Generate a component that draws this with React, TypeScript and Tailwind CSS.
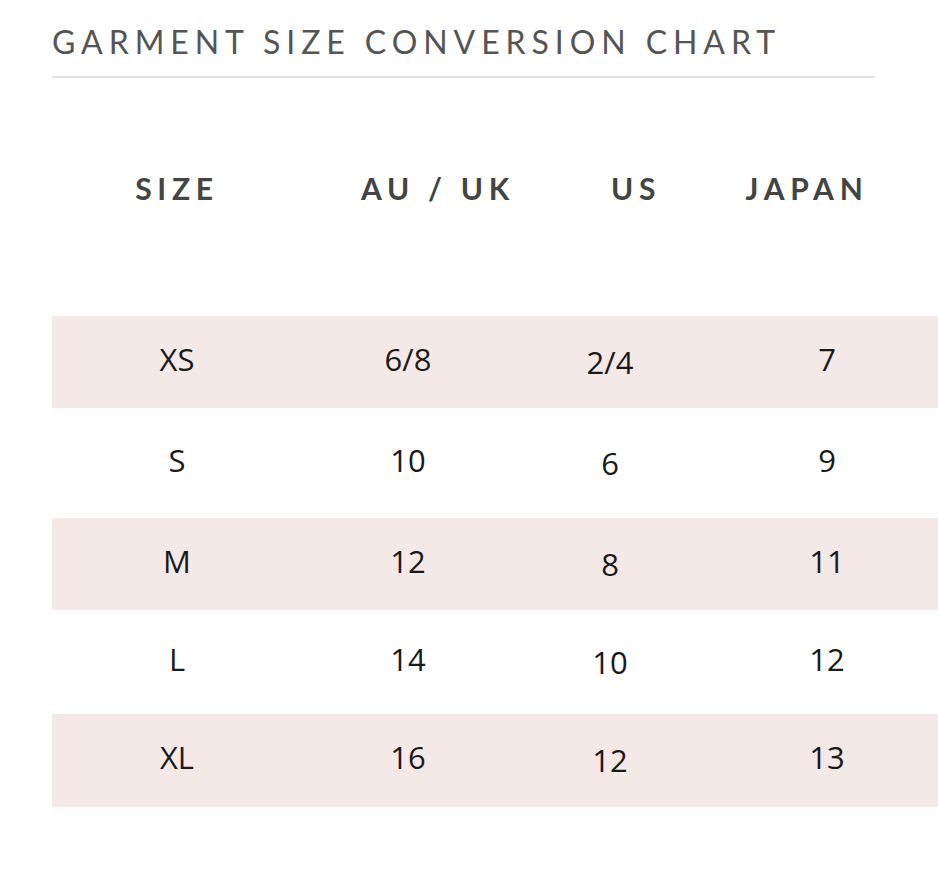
const rows = [
  { size: "XS", au: "6/8", us: "2/4", jp: "7", shaded: true, h: "h-[92px]" },
  { size: "S", au: "10", us: "6", jp: "9", shaded: false, h: "h-[110px]" },
  { size: "M", au: "12", us: "8", jp: "11", shaded: true, h: "h-[92px]" },
  { size: "L", au: "14", us: "10", jp: "12", shaded: false, h: "h-[104px]" },
  { size: "XL", au: "16", us: "12", jp: "13", shaded: true, h: "h-[93px]" },
];

export default function App() {
  return (
    <main className="h-[872px] w-[938px] overflow-hidden bg-white pl-[52px] pt-[26px] font-['Open_Sans',sans-serif]">
      <section className="w-[823px] border-b-2 border-[#e2e2e2] pb-[18px]">
        <h1 className="font-['Lato',sans-serif] text-[32px] leading-[32px] font-normal tracking-[0.185em] whitespace-nowrap text-[#555]">
          GARMENT SIZE CONVERSION CHART
        </h1>
      </section>

      <div className="mt-[88px] grid h-[40px] grid-cols-[250px_272px_124px_218px] items-center font-['Lato',sans-serif] text-[30px] font-bold tracking-[0.19em] text-[#444]">
        <span className="text-center">SIZE</span>
        <span className="text-center">AU / UK</span>
        <span className="text-center">US</span>
        <span className="text-center">JAPAN</span>
      </div>

      <div className="mt-[110px] w-[886px]">
        {rows.map((r) => (
          <div
            key={r.size}
            className={`grid ${r.h} grid-cols-[250px_212px_192px_1fr] items-center text-[31px] text-[#1a1a1a] ${r.shaded ? "bg-[#f5e9e8]" : ""}`}
          >
            <span className="pb-[6px] text-center">{r.size}</span>
            <span className="pb-[6px] text-center">{r.au}</span>
            <span className="text-center">{r.us}</span>
            <span className="pb-[6px] pl-[10px] text-center">{r.jp}</span>
          </div>
        ))}
      </div>
    </main>
  );
}
